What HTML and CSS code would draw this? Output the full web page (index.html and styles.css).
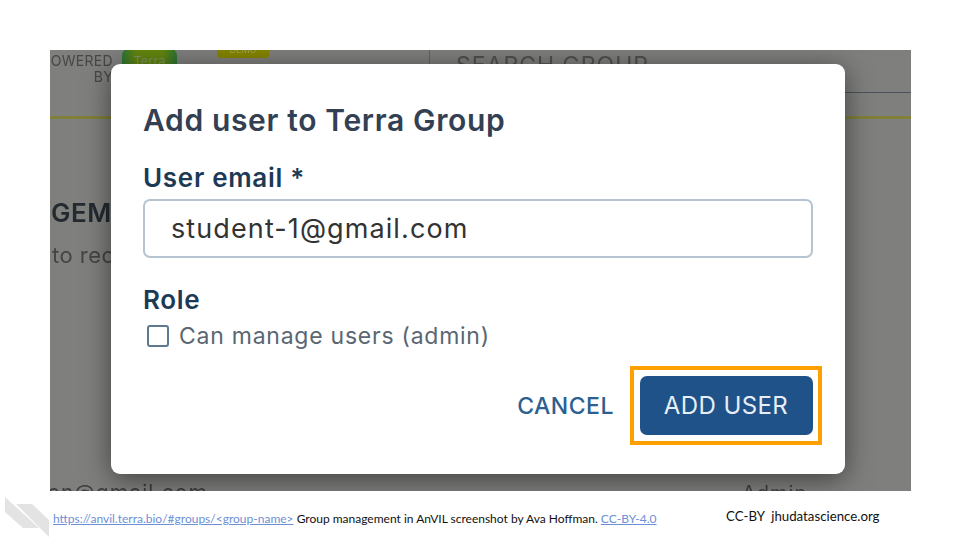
FILE: index.html
```html
<!DOCTYPE html>
<html lang="en">
<head>
<meta charset="utf-8">
<title>Add user to Terra Group</title>
<link rel="stylesheet" href="styles.css">
</head>
<body>
<main class="slide">
  <section class="shot">
    <div class="bg-powered">OWERED<br>BY</div>
    <div class="bg-logo">Terra</div>
    <div class="bg-badge">DEMO</div>
    <div class="bg-divider"></div>
    <div class="bg-search">SEARCH GROUP</div>
    <div class="bg-search-line"></div>
    <div class="bg-olive"></div>
    <div class="bg-title">GEM</div>
    <div class="bg-sub">to rec</div>
    <div class="bg-mail">an@gmail.com</div>
    <div class="bg-admin">Admin</div>
    <div class="modal">
      <h1 class="modal-title">Add user to Terra Group</h1>
      <label class="field-label">User email *</label>
      <div class="input">student-1@gmail.com</div>
      <div class="field-label role">Role</div>
      <div class="check-row"><span class="checkbox"></span><span class="check-text">Can manage users (admin)</span></div>
      <div class="actions">
        <span class="cancel">CANCEL</span>
        <span class="highlight"><span class="add">ADD USER</span></span>
      </div>
    </div>
  </section>
  <svg class="corner" width="50" height="50" viewBox="0 0 50 50"><path d="M5 7 L5 22 L23 38 L39 38 Z" fill="#e3e3e3"/><path d="M16 14 L32 14 L49 30 L49 47 Z" fill="#e3e3e3"/></svg>
  <p class="caption"><a href="#">https://anvil.terra.bio/#groups/&lt;group-name&gt;</a> Group management in AnVIL screenshot by Ava Hoffman. <a class="license" href="#">CC-BY-4.0</a></p>
  <p class="credit">CC-BY&nbsp; jhudatascience.org</p>
</main>
</body>
</html>
```

FILE: styles.css
```css
html, body { margin: 0; padding: 0; background: #fff; }
.slide { position: relative; width: 960px; height: 540px; overflow: hidden; font-family: "Inter", "Noto Sans", sans-serif; }
.shot { position: absolute; left: 50px; top: 50px; width: 861px; height: 441px; overflow: hidden; background: #7f7f7d; }
.bg-powered { position: absolute; right: 798px; top: 3px; font-size: 14px; line-height: 16px; color: #474747; text-align: right; white-space: nowrap; filter: blur(.5px); letter-spacing: .3px; }
.bg-logo { position: absolute; left: 72px; top: -3px; width: 55px; height: 40px; background: linear-gradient(90deg, #2c7434, #63860f 25%, #63860f 75%, #2c7434); border-radius: 9px; color: #7c9360; font-size: 13px; text-align: center; line-height: 28px; filter: blur(.5px); }
.bg-badge { position: absolute; left: 167px; top: -6px; width: 52px; height: 14px; background: #858500; border-radius: 3px; color: #a5a54a; font-size: 9px; text-align: center; filter: blur(.4px); }
.bg-divider { position: absolute; left: 379px; top: 0; width: 1px; height: 40px; background: #5f6265; }
.bg-search { position: absolute; left: 406px; top: 1px; font-size: 23px; line-height: 28px; color: #505050; letter-spacing: 1px; white-space: nowrap; filter: blur(.5px); }
.bg-search-line { position: absolute; left: 380px; right: 0; top: 42px; height: 1px; background: #4b5358; }
.bg-olive { position: absolute; left: 0; right: 0; top: 66px; height: 3px; background: #80803a; filter: blur(.5px); }
.bg-title { position: absolute; left: 1px; top: 149px; font-size: 26px; line-height: 28px; font-weight: 600; letter-spacing: .5px; color: #232b31; filter: blur(.4px); }
.bg-sub { position: absolute; left: 2px; top: 192px; font-size: 22px; line-height: 26px; letter-spacing: .5px; color: #454545; filter: blur(.4px); }
.bg-mail { position: absolute; left: -2px; top: 431px; font-size: 21px; line-height: 24px; letter-spacing: 1.1px; color: #3f3f3f; filter: blur(.5px); white-space: nowrap; }
.bg-admin { position: absolute; left: 692px; top: 431px; font-size: 20px; line-height: 24px; letter-spacing: 1px; color: #3f3f3f; filter: blur(.5px); }
.modal { position: absolute; left: 61px; top: 14px; width: 734px; height: 410px; box-sizing: border-box; padding: 36px 32px 0 32px; background: #fff; border-radius: 9px; box-shadow: 0 5px 28px rgba(0,0,0,.5); display: flex; flex-direction: column; }
.modal-title { margin: 0; font-size: 30px; line-height: 40px; font-weight: 600; letter-spacing: .65px; color: #333f52; }
.field-label { margin-top: 23px; font-size: 26px; line-height: 30px; font-weight: 600; letter-spacing: .7px; color: #1c3a55; }
.input { margin-top: 6px; height: 59px; box-sizing: border-box; border: 2px solid #b6c4d2; border-radius: 7px; padding: 0 26px; font-size: 27px; line-height: 55px; letter-spacing: 1.1px; color: #333; }
.role { margin-top: 27px; }
.check-row { display: flex; align-items: center; gap: 10px; margin-top: 6px; margin-left: 4px; }
.checkbox { width: 22px; height: 22px; box-sizing: border-box; border: 2px solid #5d7a92; border-radius: 3px; }
.check-text { font-size: 23px; line-height: 30px; letter-spacing: .75px; color: #5a6672; }
.actions { display: flex; align-items: center; justify-content: flex-end; margin-top: 15px; margin-right: -9px; }
.cancel { font-size: 23px; font-weight: 500; letter-spacing: .5px; color: #2b6090; margin-right: 16px; }
.highlight { box-sizing: border-box; width: 192px; height: 79px; border: 4px solid #ff9f00; display: flex; align-items: center; justify-content: center; }
.add { width: 173px; height: 59px; background: #1f5289; border-radius: 7px; color: #e8eef5; font-size: 24px; letter-spacing: .4px; line-height: 59px; text-align: center; }
.corner { position: absolute; left: 0; top: 490px; }
.caption { position: absolute; left: 53px; top: 511px; margin: 0; font-family: "Lato", sans-serif; font-size: 12px; line-height: 16px; color: #111; white-space: nowrap; }
.caption a { color: #6d8fd6; }
.credit { position: absolute; left: 726px; top: 508px; margin: 0; font-family: "Lato", sans-serif; font-size: 13.25px; line-height: 16px; color: #111; white-space: nowrap; }
```
